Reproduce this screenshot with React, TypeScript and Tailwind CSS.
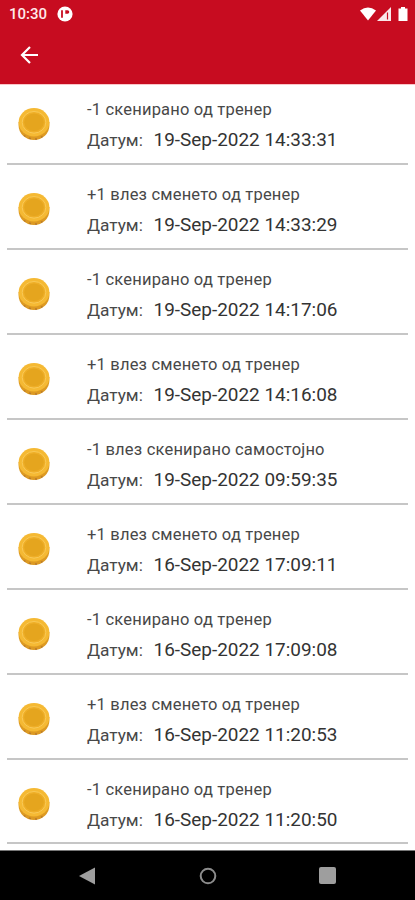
import React from 'react';

interface Entry {
  id: number;
  title: string;
  date: string;
}

const entries: Entry[] = [
  { id: 1, title: '-1 скенирано од тренер', date: '19-Sep-2022 14:33:31' },
  { id: 2, title: '+1 влез сменето од тренер', date: '19-Sep-2022 14:33:29' },
  { id: 3, title: '-1 скенирано од тренер', date: '19-Sep-2022 14:17:06' },
  { id: 4, title: '+1 влез сменето од тренер', date: '19-Sep-2022 14:16:08' },
  { id: 5, title: '-1 влез скенирано самостојно', date: '19-Sep-2022 09:59:35' },
  { id: 6, title: '+1 влез сменето од тренер', date: '16-Sep-2022 17:09:11' },
  { id: 7, title: '-1 скенирано од тренер', date: '16-Sep-2022 17:09:08' },
  { id: 8, title: '+1 влез сменето од тренер', date: '16-Sep-2022 11:20:53' },
  { id: 9, title: '-1 скенирано од тренер', date: '16-Sep-2022 11:20:50' },
];

const Coin = () => (
  <svg viewBox="0 0 32 32" className="h-8 w-8">
    <path d="M.6 14v3.500a15.400 14.500 0 0 0 30.800 0V14z" fill="#dd9a22" />
    <path d="M6 27.500l1.500 1M11 30l2 .7M17 31h2M23 29.300l1.500-1" stroke="#b87a2c" strokeWidth="1.400" />
    <ellipse cx="16" cy="14.300" rx="15.400" ry="14.200" fill="#f5b933" />
    <ellipse cx="16" cy="14.300" rx="11.800" ry="10.800" fill="#eeae27" stroke="#f9cc5c" strokeWidth="0.900" />
    <ellipse cx="16" cy="14.300" rx="9.700" ry="8.800" fill="#e5a51e" />
  </svg>
);

const StatusBar = () => (
  <div className="flex h-[28px] items-center pl-[9px] pr-[7px] text-[#ffe9ea]">
    <span className="w-[38px] text-[15px] font-medium leading-none">10:30</span>
    <svg viewBox="0 0 16 16" className="ml-[10px] h-4 w-4">
      <circle cx="8" cy="8" r="7.600" fill="#fff" />
      <path d="M5 4.200v7.600" fill="none" stroke="#c70c20" strokeWidth="1.800" />
      <path d="M6.800 4.200h3.700a1.700 1.700 0 0 1 0 3.600H8.300V4.200" fill="#c70c20" />
    </svg>
    <div className="ml-auto flex items-center">
      <svg viewBox="0 0 16 14" className="h-[14px] w-4">
        <path d="M0 3.500Q8-2.500 16 3.500L8 13.500z" fill="#fff" />
      </svg>
      <svg viewBox="0 0 14 14" className="ml-[1px] h-[14px] w-[14px]">
        <path d="M14 0v14H0z" fill="#fff" opacity="0.900" />
        <path d="M10.500 5.500v7" stroke="#c70c20" strokeWidth="1.200" />
      </svg>
      <svg viewBox="0 0 10 14" className="ml-[7px] h-[14px] w-[10px]">
        <path d="M3 0h4v1.500h2.500V14H.5V1.500H3z" fill="#fff" />
      </svg>
    </div>
  </div>
);

const EntryRow = ({ entry }: { entry: Entry }) => (
  <div className="mx-[7px] flex h-[84.950px] shrink-0 items-start border-b-2 border-[#c6c6c6]">
    <div className="ml-[11px] mt-[28px] w-[69px]">
      <Coin />
    </div>
    <div className="pt-[19px] text-[#484848]">
      <p className="h-[29px] text-[16.500px] leading-[22px] tracking-[0.190px]">{entry.title}</p>
      <div className="flex items-baseline whitespace-nowrap leading-[24px]">
        <span className="w-[66.500px] text-[17.300px]">Датум:</span>
        <span className="text-[18.950px] text-[#333]">{entry.date}</span>
      </div>
    </div>
  </div>
);

const App = () => {
  return (
    <div className="flex h-[900px] w-[415px] flex-col overflow-hidden bg-white font-['Roboto',sans-serif]">
      {/* header */}
      <header className="h-[85px] shrink-0 border-b border-[#fbc5c8] bg-[#c70c20]">
        <StatusBar />
        <button className="ml-[20px] mt-[18px] block h-[18px] w-[19px]" aria-label="Назад">
          <svg viewBox="0 0 19 18" className="h-[18px] w-[19px]" fill="none" stroke="#fff" strokeWidth="2.200">
            <path d="M18 9H2M10 1L2 9l8 8" />
          </svg>
        </button>
      </header>

      {/* history list */}
      <main className="-mt-[5px] flex flex-1 flex-col overflow-hidden">
        {entries.map((entry) => (
          <EntryRow key={entry.id} entry={entry} />
        ))}
      </main>

      {/* navigation bar */}
      <nav className="flex h-[50px] shrink-0 items-center border-t border-[#777] bg-black">
        <svg viewBox="0 0 16 18" className="ml-[79px] h-[18px] w-4">
          <path d="M16 .5v17L0 9z" fill="#9e9e9e" />
        </svg>
        <svg viewBox="0 0 18 18" className="ml-[104px] h-[18px] w-[18px]">
          <circle cx="9" cy="9" r="7.300" fill="none" stroke="#8c8c8c" strokeWidth="2" />
        </svg>
        <div className="ml-[102px] h-[17px] w-[17px] rounded-[2px] bg-[#9e9e9e]" />
      </nav>
    </div>
  );
};

export default App;
